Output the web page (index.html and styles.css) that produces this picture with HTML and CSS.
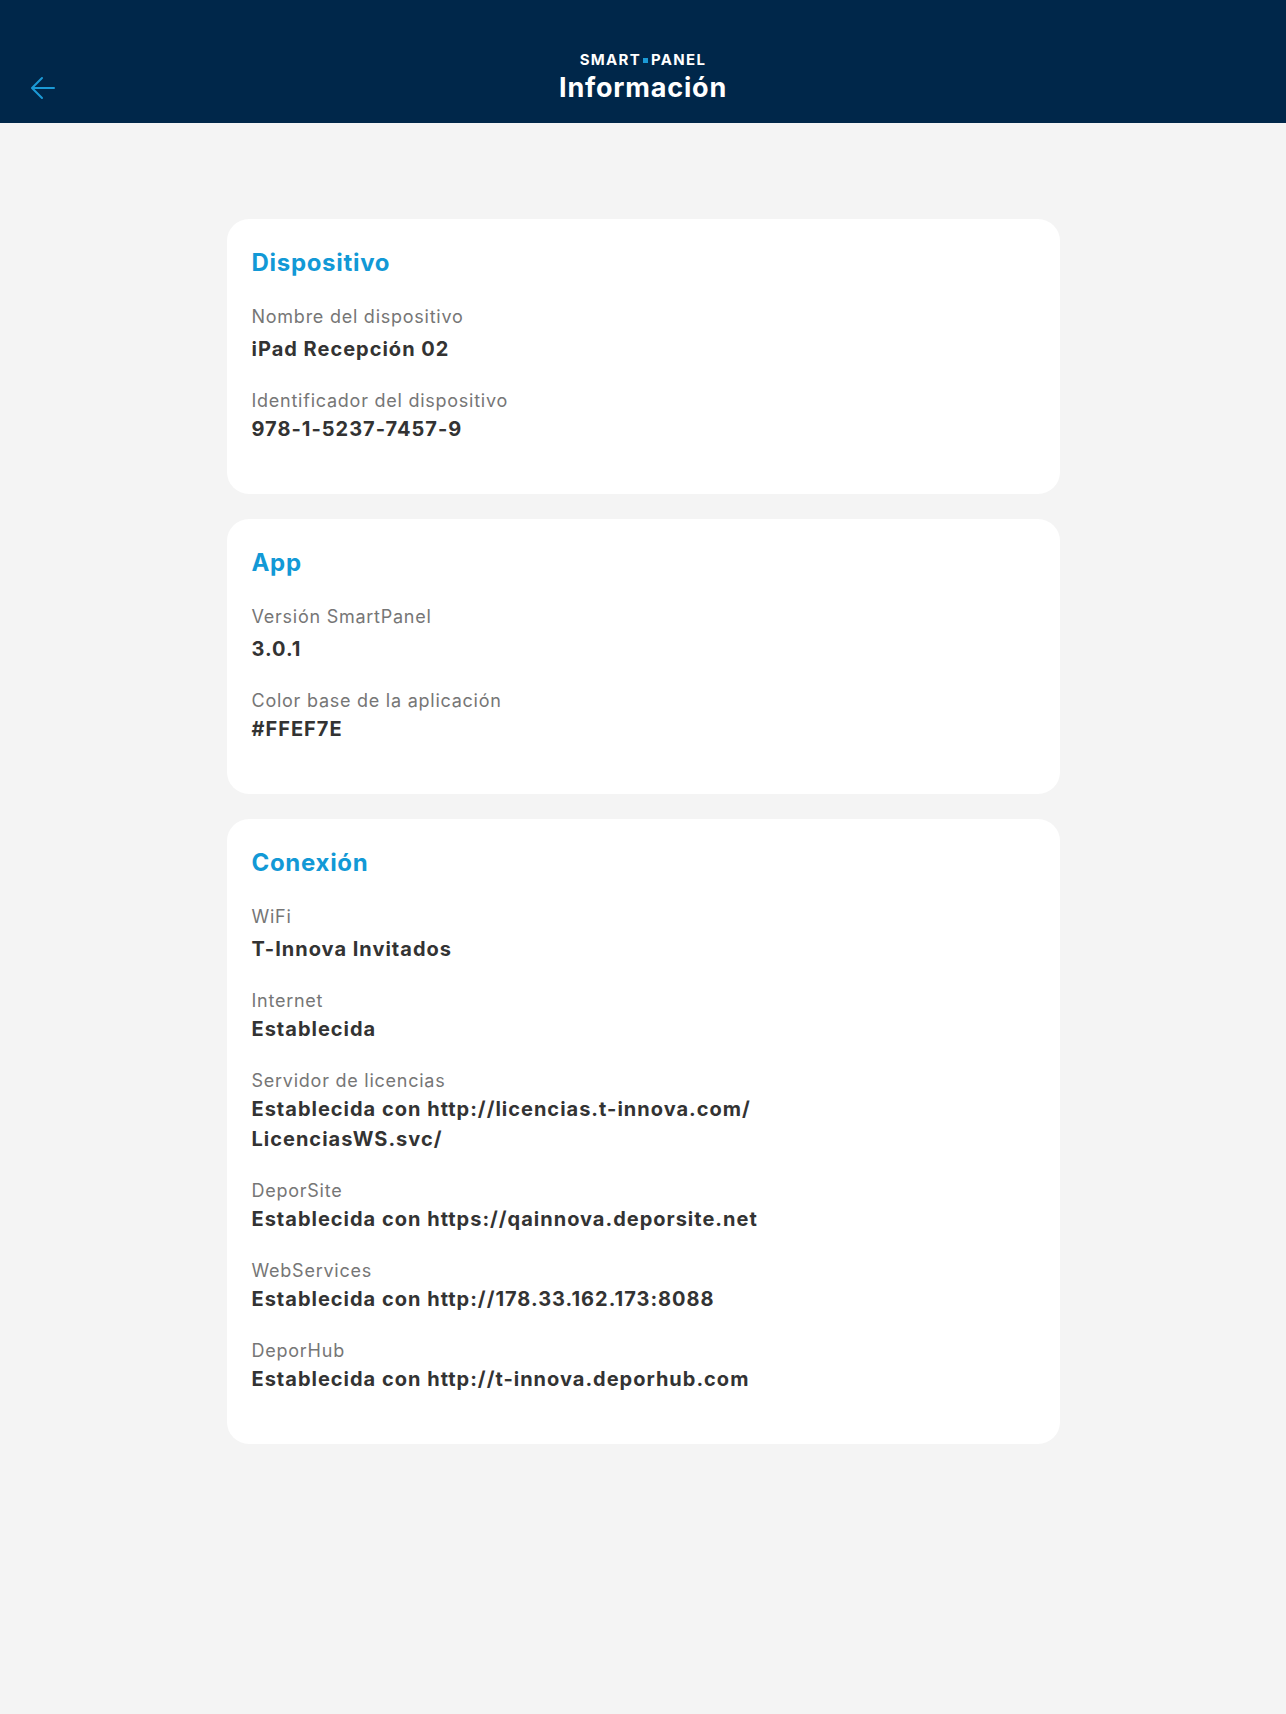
FILE: index.html
```html
<!DOCTYPE html>
<html lang="es">
<head>
    <meta charset="UTF-8">
    <title>SmartPanel - Información</title>
    <link rel="stylesheet" href="styles.css">
</head>
<body>

    <!-- Cabecera -->
    <header class="topbar">
        <button class="back-btn" aria-label="Volver">
            <svg width="26" height="24" viewBox="0 0 26 24" fill="none" stroke="#1b9ad6" stroke-width="2" stroke-linecap="round" stroke-linejoin="round">
                <path d="M24 12H3"/>
                <path d="M12 2L2 12l10 10"/>
            </svg>
        </button>
        <div class="topbar-title">
            <span class="brand">SMART<span class="brand-dot"></span>PANEL</span>
            <h1>Información</h1>
        </div>
    </header>

    <!-- Contenido -->
    <main class="content">
        <section class="card">
            <h2>Dispositivo</h2>
            <div class="field">
                <span class="label">Nombre del dispositivo</span>
                <span class="value">iPad Recepción 02</span>
            </div>
            <div class="field">
                <span class="label">Identificador del dispositivo</span>
                <span class="value">978-1-5237-7457-9</span>
            </div>
        </section>

        <section class="card">
            <h2>App</h2>
            <div class="field">
                <span class="label">Versión SmartPanel</span>
                <span class="value">3.0.1</span>
            </div>
            <div class="field">
                <span class="label">Color base de la aplicación</span>
                <span class="value">#FFEF7E</span>
            </div>
        </section>

        <section class="card">
            <h2>Conexión</h2>
            <div class="field">
                <span class="label">WiFi</span>
                <span class="value">T-Innova Invitados</span>
            </div>
            <div class="field">
                <span class="label">Internet</span>
                <span class="value">Establecida</span>
            </div>
            <div class="field">
                <span class="label">Servidor de licencias</span>
                <span class="value">Establecida con http://licencias.t-innova.com/<br>LicenciasWS.svc/</span>
            </div>
            <div class="field">
                <span class="label">DeporSite</span>
                <span class="value">Establecida con https://qainnova.deporsite.net</span>
            </div>
            <div class="field">
                <span class="label">WebServices</span>
                <span class="value">Establecida con http://178.33.162.173:8088</span>
            </div>
            <div class="field">
                <span class="label">DeporHub</span>
                <span class="value">Establecida con http://t-innova.deporhub.com</span>
            </div>
        </section>
    </main>

</body>
</html>
```

FILE: styles.css
```css
body {
    font-family: 'Inter', 'Noto Sans', sans-serif;
    margin: 0;
    padding: 0;
    background-color: #f4f4f4;
    color: #333;
    min-height: 1714px;
}
.topbar {
    height: 123px;
    background-color: #00274a;
    display: flex;
    align-items: center;
    justify-content: center;
    position: relative;
}
.back-btn {
    position: absolute;
    left: 30px;
    top: 76px;
    padding: 0;
    border: none;
    background: none;
    cursor: pointer;
}
.back-btn svg {
    display: block;
}
.topbar-title {
    display: flex;
    flex-direction: column;
    align-items: center;
    padding-top: 32px;
}
.brand {
    color: #fff;
    font-size: 15px;
    font-weight: 700;
    letter-spacing: 1.3px;
    line-height: 16px;
    display: flex;
    align-items: center;
}
.brand-dot {
    width: 5px;
    height: 5px;
    background-color: #1b9ad6;
    margin: 1px 3px 0 2px;
}
.topbar-title h1 {
    margin: 4px 0 0 0;
    color: #fff;
    font-size: 27px;
    font-weight: 700;
    letter-spacing: 0.8px;
    line-height: 32px;
}
.content {
    width: 833px;
    margin: 96px auto 0 auto;
    display: flex;
    flex-direction: column;
    gap: 25px;
}
.card {
    background: #fff;
    border-radius: 22px;
    padding: 29px 25px 50px 25px;
    display: flex;
    flex-direction: column;
    gap: 25px;
}
.card h2 {
    margin: 0 0 2px 0;
    font-size: 24px;
    font-weight: 700;
    letter-spacing: 0.7px;
    line-height: 30px;
    color: #1299d6;
}
.field {
    display: flex;
    flex-direction: column;
}
.label {
    font-size: 18px;
    font-weight: 400;
    letter-spacing: 0.75px;
    line-height: 24px;
    color: #767676;
}
.value {
    font-size: 20px;
    font-weight: 700;
    letter-spacing: 1px;
    line-height: 30px;
    color: #333;
    margin-top: 1px;
}
.card h2 + .field .value {
    margin-top: 5px;
}
```
